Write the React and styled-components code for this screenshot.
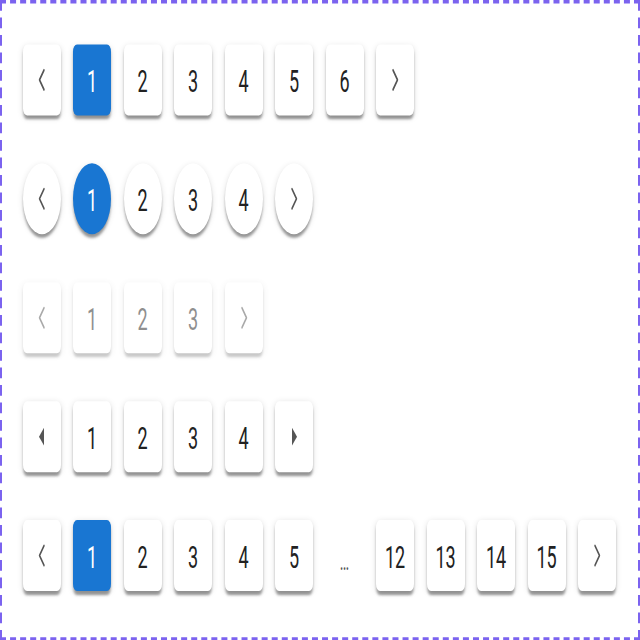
import React from 'react';
import styled, { createGlobalStyle } from 'styled-components';

const SCALE = 1.775;

const GlobalStyle = createGlobalStyle`
  html, body {
    margin: 0;
    padding: 0;
    background: #ffffff;
  }
`;

const Stage = styled.div`
  width: 640px;
  height: 640px;
  overflow: hidden;
  background: #ffffff;
`;

const Frame = styled.div`
  box-sizing: border-box;
  width: 640px;
  height: ${640 / SCALE}px;
  border: 2.5px dashed #7b63ef;
  padding: 23px 20.5px;
  display: flex;
  flex-direction: column;
  gap: 27px;
  transform: scaleY(${SCALE});
  transform-origin: top left;
  font-family: Roboto, 'Liberation Sans', sans-serif;
`;

const Row = styled.nav`
  display: flex;
  align-items: center;
  gap: 12.5px;
`;

const PageButton = styled.button`
  box-sizing: border-box;
  width: 38px;
  height: 40px;
  padding: 0;
  border: none;
  border-radius: ${({ $round }) => ($round ? '50%' : '4px')};
  background: ${({ $active }) => ($active ? '#1976d2' : '#ffffff')};
  color: ${({ $active }) => ($active ? '#ffffff' : '#222222')};
  font-family: inherit;
  font-size: 18px;
  font-weight: 400;
  display: flex;
  align-items: center;
  justify-content: center;
  opacity: ${({ disabled }) => (disabled ? 0.5 : 1)};
  box-shadow: 0 3px 2px -1px rgba(0, 0, 0, 0.28), 0 2px 2px 0 rgba(0, 0, 0, 0.14),
    0 1px 5px 0 rgba(0, 0, 0, 0.12);
  cursor: pointer;
`;

const Ellipsis = styled.span`
  width: 38px;
  text-align: center;
  color: #555555;
  font-size: 14px;
  padding-top: 5px;
`;

const Chevron = ({ dir }) => (
  <svg width="16" height="16" viewBox="0 0 16 16" fill="none">
    <polyline
      points={dir === 'prev' ? '10,2.5 5.5,8 10,13.5' : '6,2.5 10.5,8 6,13.5'}
      stroke="#555"
      strokeWidth="1.4"
      strokeLinecap="round"
      strokeLinejoin="round"
    />
  </svg>
);

const Caret = ({ dir }) => (
  <svg width="24" height="24" viewBox="0 0 24 24">
    <path d={dir === 'prev' ? 'M14 7l-5 5 5 5z' : 'M10 17l5-5-5-5z'} fill="#555" />
  </svg>
);

const rows = [
  { pages: [1, 2, 3, 4, 5, 6], icon: 'chevron' },
  { pages: [1, 2, 3, 4], icon: 'chevron', round: true },
  { pages: [1, 2, 3], icon: 'chevron', disabled: true, noActive: true },
  { pages: [1, 2, 3, 4], icon: 'caret', noActive: true },
  { pages: [1, 2, 3, 4, 5, '...', 12, 13, 14, 15], icon: 'chevron' },
];

const Pagination = ({ pages, icon, round, disabled, noActive }) => {
  const Arrow = icon === 'caret' ? Caret : Chevron;
  return (
    <Row>
      <PageButton $round={round} disabled={disabled} aria-label="previous">
        <Arrow dir="prev" />
      </PageButton>
      {pages.map((p, i) =>
        p === '...' ? (
          <Ellipsis key={`e${i}`}>…</Ellipsis>
        ) : (
          <PageButton
            key={p}
            $round={round}
            $active={!noActive && p === 1}
            disabled={disabled}
          >
            {p}
          </PageButton>
        )
      )}
      <PageButton $round={round} disabled={disabled} aria-label="next">
        <Arrow dir="next" />
      </PageButton>
    </Row>
  );
};

const App = () => (
  <Stage>
    <GlobalStyle />
    <Frame>
      {rows.map((row, i) => (
        <Pagination key={i} {...row} />
      ))}
    </Frame>
  </Stage>
);

export default App;
